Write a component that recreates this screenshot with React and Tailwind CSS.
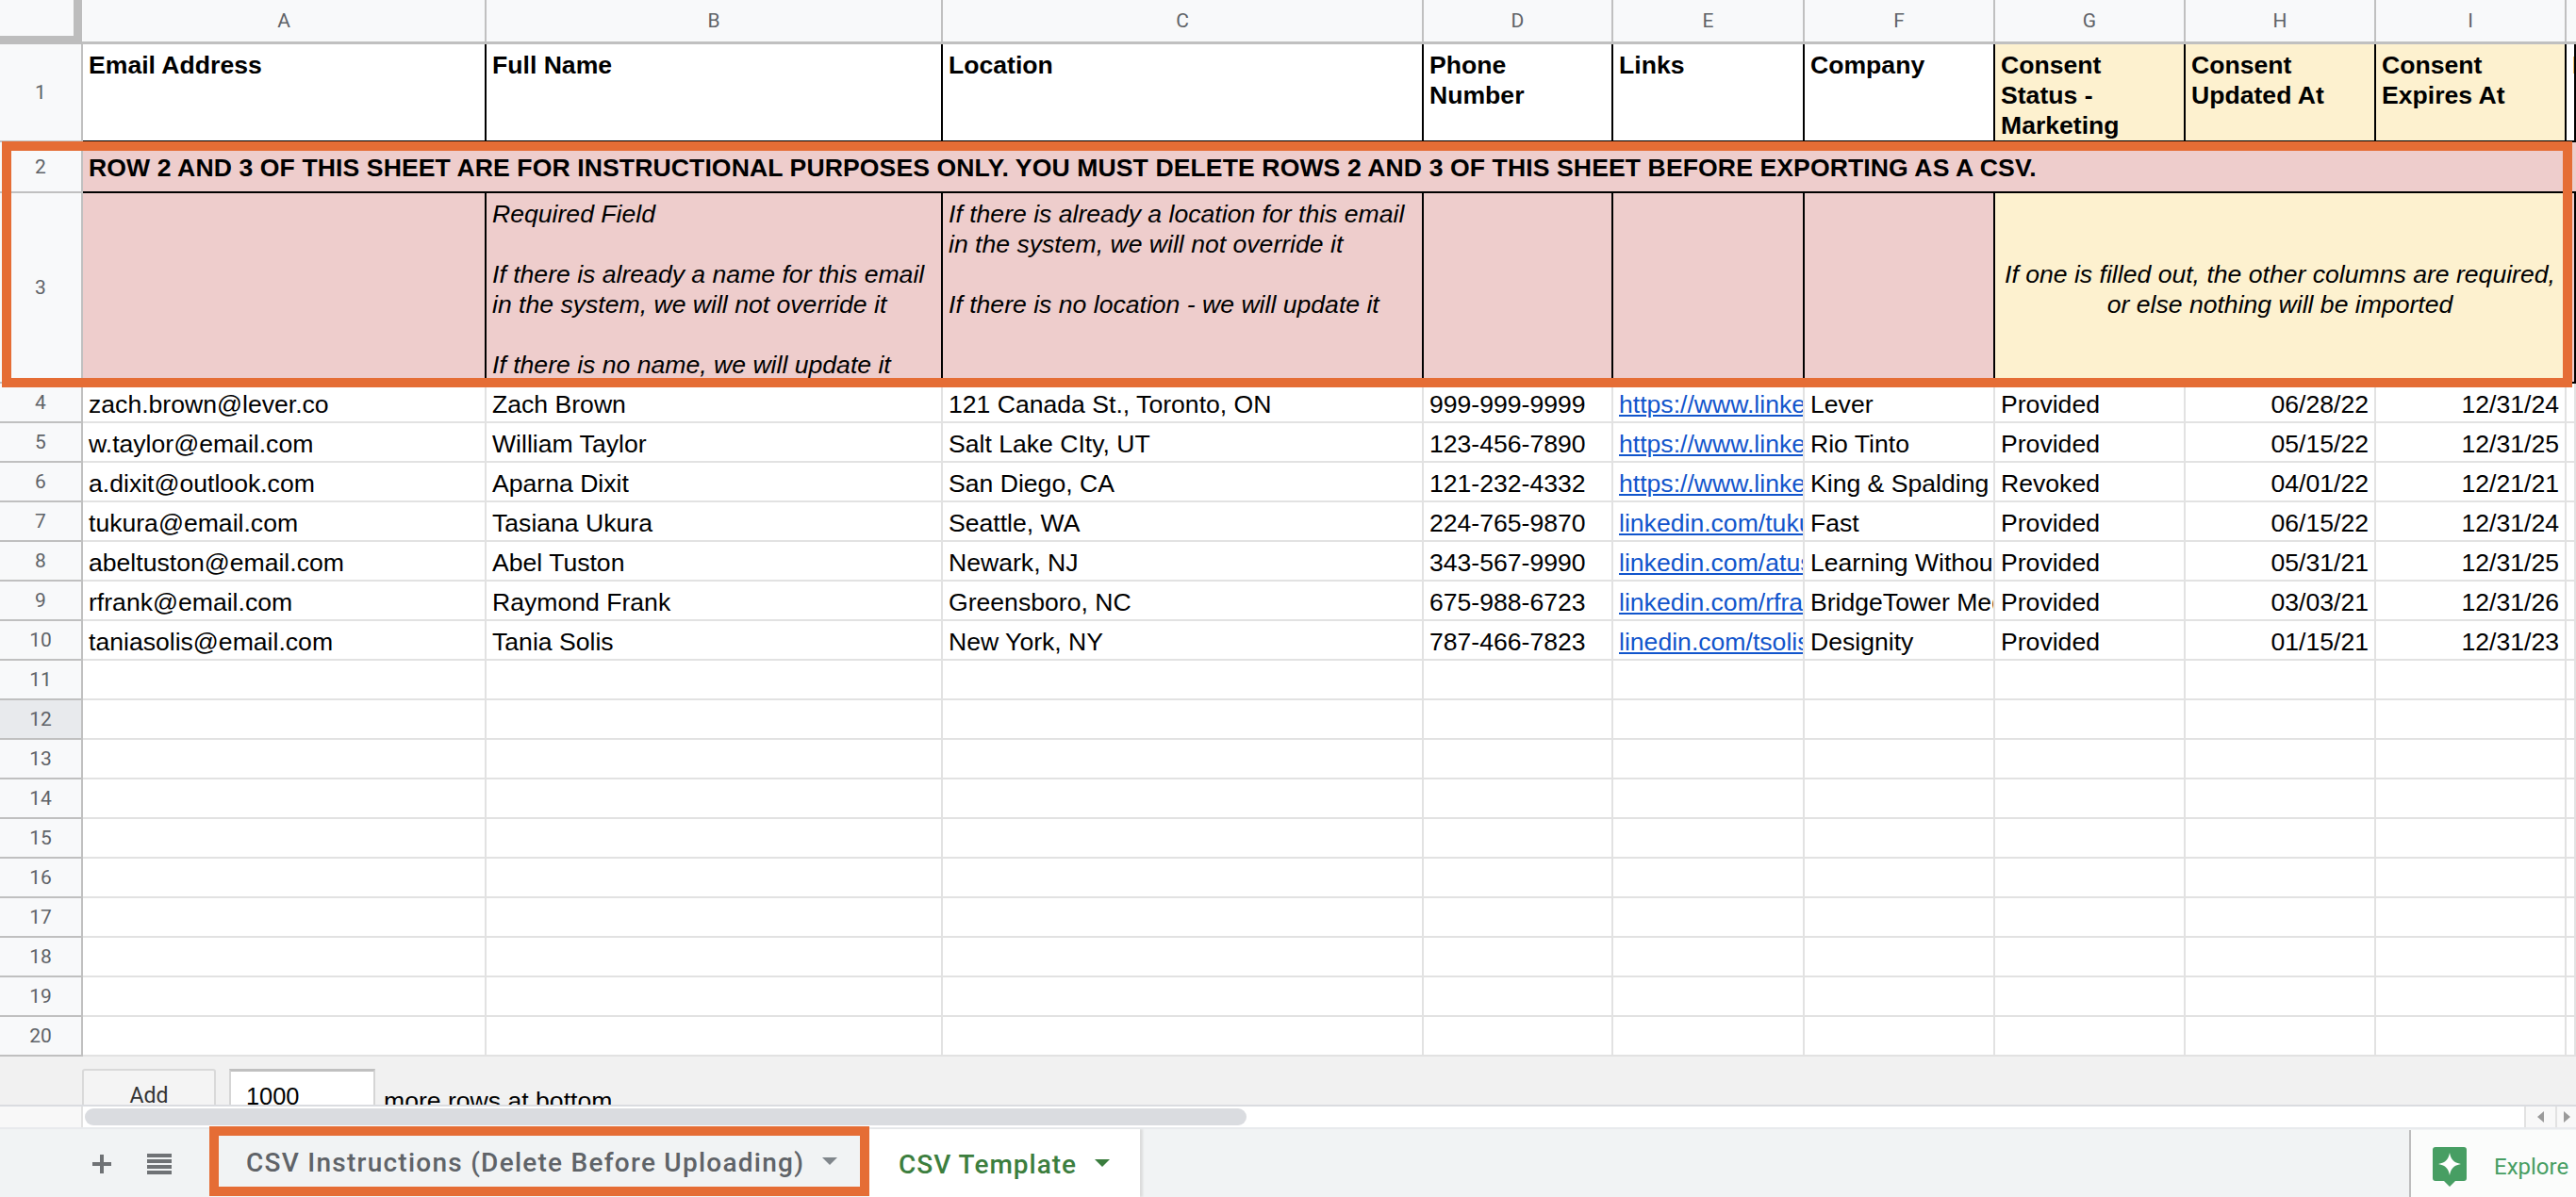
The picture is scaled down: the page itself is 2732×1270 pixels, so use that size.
const columns = ["A", "B", "C", "D", "E", "F", "G", "H", "I"];

const people = [
  ["zach.brown@lever.co", "Zach Brown", "121 Canada St., Toronto, ON", "999-999-9999", "https://www.linkedin.com/in/zachbrown", "Lever", "Provided", "06/28/22", "12/31/24"],
  ["w.taylor@email.com", "William Taylor", "Salt Lake CIty, UT", "123-456-7890", "https://www.linkedin.com/in/wtaylor", "Rio Tinto", "Provided", "05/15/22", "12/31/25"],
  ["a.dixit@outlook.com", "Aparna Dixit", "San Diego, CA", "121-232-4332", "https://www.linkedin.com/in/adixit", "King & Spalding", "Revoked", "04/01/22", "12/21/21"],
  ["tukura@email.com", "Tasiana Ukura", "Seattle, WA", "224-765-9870", "linkedin.com/tukura", "Fast", "Provided", "06/15/22", "12/31/24"],
  ["abeltuston@email.com", "Abel Tuston", "Newark, NJ", "343-567-9990", "linkedin.com/atuston", "Learning Without Limits", "Provided", "05/31/21", "12/31/25"],
  ["rfrank@email.com", "Raymond Frank", "Greensboro, NC", "675-988-6723", "linkedin.com/rfrank", "BridgeTower Media", "Provided", "03/03/21", "12/31/26"],
  ["taniasolis@email.com", "Tania Solis", "New York, NY", "787-466-7823", "linedin.com/tsolis", "Designity", "Provided", "01/15/21", "12/31/23"],
];

const emptyRows = [11, 12, 13, 14, 15, 16, 17, 18, 19, 20];

const rowClass = "grid grid-cols-[88px_428px_484px_510px_201px_203px_202px_202px_202px_202px_1fr]";
const sheetFont = "font-['Liberation_Sans',Arial,sans-serif] text-[26.6px] leading-[32px] text-black";
const headerFont = "font-['Roboto',sans-serif] text-[21px] text-[#5f6368]";

function RowHeader({ n, active }) {
  return (
    <div className={`flex items-center justify-center border-r-2 border-b-2 border-[#c0c0c0] ${headerFont} ${active ? "bg-[#e8eaed]" : "bg-[#f8f9fa]"}`}>
      {n}
    </div>
  );
}

function HeadCell({ children, yellow }) {
  return (
    <div className={`overflow-hidden whitespace-nowrap border-r-2 border-b-2 border-black pl-[6px] pt-[6px] font-bold ${yellow ? "bg-[#fdf1cf]" : "bg-white"}`}>
      {children}
    </div>
  );
}

function NoteCell({ children }) {
  return (
    <div className="overflow-hidden whitespace-nowrap border-r-2 border-b-2 border-black bg-[#eecdcc] pl-[6px] pt-[6px] italic">
      {children}
    </div>
  );
}

function DataCell({ children, right, link }) {
  return (
    <div className={`overflow-hidden whitespace-nowrap border-r-2 border-b-2 border-[#e2e2e2] pt-[6px] ${right ? "pr-[6px] text-right" : "pl-[6px]"} ${link ? "text-[#1155cc] underline" : ""}`}>
      {children}
    </div>
  );
}

function Caret({ className }) {
  return <div className={`h-0 w-0 border-x-[8px] border-t-[8px] border-x-transparent ${className}`} />;
}

export default function App() {
  return (
    <div className="relative flex h-screen w-full flex-col overflow-hidden bg-white">
      {/* column letters */}
      <div className={`${rowClass} h-[47px] border-b-[3px] border-[#c0c0c0] bg-[#f8f9fa] ${headerFont}`}>
        <div className="-mb-[3px] mr-px border-r-[9px] border-b-[9px] border-[#bdbdbd]" />
        {columns.map((c) => (
          <div key={c} className="flex items-center justify-center border-r-2 border-[#c0c0c0] pt-[2px]">{c}</div>
        ))}
        <div />
      </div>

      <div className={sheetFont}>
        <div className={`${rowClass} h-[104px]`}>
          <RowHeader n={1} />
          <HeadCell>Email Address</HeadCell>
          <HeadCell>Full Name</HeadCell>
          <HeadCell>Location</HeadCell>
          <HeadCell>Phone<br />Number</HeadCell>
          <HeadCell>Links</HeadCell>
          <HeadCell>Company</HeadCell>
          <HeadCell yellow>Consent<br />Status -<br />Marketing</HeadCell>
          <HeadCell yellow>Consent<br />Updated At</HeadCell>
          <HeadCell yellow>Consent<br />Expires At</HeadCell>
          <HeadCell>Last</HeadCell>
        </div>

        <div className={`${rowClass} h-[54px]`}>
          <RowHeader n={2} />
          <div className="col-span-10 flex items-center whitespace-nowrap border-b-2 border-black bg-[#eecdcc] pl-[6px] pt-[2px] font-bold tracking-[0.09px]">
            ROW 2 AND 3 OF THIS SHEET ARE FOR INSTRUCTIONAL PURPOSES ONLY. YOU MUST DELETE ROWS 2 AND 3 OF THIS SHEET BEFORE EXPORTING AS A CSV.
          </div>
        </div>

        <div className={`${rowClass} h-[202px]`}>
          <RowHeader n={3} />
          <NoteCell />
          <NoteCell>
            Required Field<br /><br />
            If there is already a name for this email<br />in the system, we will not override it<br /><br />
            If there is no name, we will update it
          </NoteCell>
          <NoteCell>
            If there is already a location for this email<br />in the system, we will not override it<br /><br />
            If there is no location - we will update it
          </NoteCell>
          <NoteCell />
          <NoteCell />
          <NoteCell />
          <div className="col-span-3 flex items-center justify-center border-r-2 border-b-2 border-black bg-[#fdf1cf] pt-[3px] text-center italic">
            <span>If one is filled out, the other columns are required,<br />or else nothing will be imported</span>
          </div>
          <NoteCell />
        </div>

        {people.map((p, i) => (
          <div key={p[0]} className={`${rowClass} h-[42px]`}>
            <RowHeader n={i + 4} />
            <DataCell>{p[0]}</DataCell>
            <DataCell>{p[1]}</DataCell>
            <DataCell>{p[2]}</DataCell>
            <DataCell>{p[3]}</DataCell>
            <DataCell link>{p[4]}</DataCell>
            <DataCell>{p[5]}</DataCell>
            <DataCell>{p[6]}</DataCell>
            <DataCell right>{p[7]}</DataCell>
            <DataCell right>{p[8]}</DataCell>
            <DataCell />
          </div>
        ))}

        {emptyRows.map((n) => (
          <div key={n} className={`${rowClass} h-[42px]`}>
            <RowHeader n={n} active={n === 12} />
            {columns.map((c) => <DataCell key={c} />)}
            <DataCell />
          </div>
        ))}
      </div>

      {/* add rows */}
      <div className="flex h-[51px] items-start overflow-hidden bg-[#f1f1f1] pl-[87px] pt-[13px]">
        <div className="flex h-[60px] w-[142px] justify-center rounded-t-[3px] border-2 border-[#d9d9d9] bg-[#f4f4f4] pt-[12px] font-['Roboto',sans-serif] text-[23px] leading-[30px] text-[#333]">Add</div>
        <div className="ml-[14px] h-[60px] w-[155px] border-2 border-t-[3px] border-[#d5d5d5] border-t-[#c0c0c0] bg-white pl-[16px] pt-[11px] font-['Liberation_Sans',Arial,sans-serif] text-[25.4px] leading-[30px] text-black">1000</div>
        <div className="ml-[9px] pt-[18px] font-['Liberation_Sans',Arial,sans-serif] text-[26.6px] leading-[32px] text-black">more rows at bottom</div>
      </div>

      {/* horizontal scrollbar */}
      <div className="flex h-[24px] border-t-2 border-[#dadce0] bg-white">
        <div className="w-[88px] border-r-2 border-[#e2e2e2] bg-[#f8f8f8]" />
        <div className="flex-1 pl-[2px] pt-[2px]">
          <div className="h-[18px] w-[1232px] rounded-full bg-[#dadce0]" />
        </div>
        <div className="flex w-[33px] items-center justify-center border-l-2 border-[#e2e2e2] bg-[#f8f8f8]">
          <div className="h-0 w-0 border-y-[6px] border-r-[7px] border-y-transparent border-r-[#9a9a9a]" />
        </div>
        <div className="flex w-[22px] items-center justify-center border-l-2 border-[#e2e2e2] bg-[#f8f8f8]">
          <div className="h-0 w-0 border-y-[6px] border-l-[7px] border-y-transparent border-l-[#9a9a9a]" />
        </div>
      </div>

      {/* sheet tabs */}
      <div className="flex flex-1 border-t-2 border-[#e8eaed] bg-[#f1f3f4]">
        <div className="flex w-[222px] items-center">
          <svg className="ml-[96px] mt-[2px]" width="24" height="24" viewBox="0 0 24 24" fill="#6f7275">
            <rect x="10" y="2" width="4" height="20" />
            <rect x="2" y="10" width="20" height="4" />
          </svg>
          <svg className="ml-[36px] mt-[2px]" width="26" height="24" viewBox="0 0 26 24" fill="#6f7275">
            <rect x="0" y="1" width="26" height="4" />
            <rect x="0" y="7" width="26" height="4" />
            <rect x="0" y="13" width="26" height="4" />
            <rect x="0" y="19" width="26" height="4" />
          </svg>
        </div>
        <div className="-mt-[3px] mb-px flex w-[700px] items-center border-[10px] border-[#e56d35] pl-[29px] font-['Roboto',sans-serif] text-[28px] font-medium tracking-[1.25px] text-[#5f6368]">
          <span className="pt-[4px]">CSV Instructions (Delete Before Uploading)</span>
          <Caret className="ml-[19px] border-t-[#80868b]" />
        </div>
        <div className="flex w-[287px] items-center bg-white pl-[31px] font-['Roboto',sans-serif] text-[28px] font-medium tracking-[1px] text-[#3c7e3e] shadow-[3px_0_2px_#dcdcdc]">
          <span className="pt-[4px]">CSV Template</span>
          <Caret className="ml-[19px] border-t-[#3a7d3e]" />
        </div>
        <div className="flex-1" />
        <div className="mt-[1px] flex w-[177px] items-center border-l-2 border-[#bdbdbd] bg-[#fbfcfb] pl-[22px]">
          <svg width="38" height="44" viewBox="0 0 38 44" className="mt-[6px]">
            <path fill="#479e63" d="M4 1h30a3 3 0 0 1 3 3v30a3 3 0 0 1-3 3h-9l-6 6-6-6H4a3 3 0 0 1-3-3V4a3 3 0 0 1 3-3z" />
            <path fill="#fff" d="M19 7c1.400 7 4 10.600 12 12-8 1.400-10.600 5-12 12-1.400-7-4-10.600-12-12 8-1.400 10.600-5 12-12z" />
          </svg>
          <span className="ml-[28px] pt-[6px] font-['Roboto',sans-serif] text-[24px] text-[#479e63]">Explore</span>
        </div>
      </div>

      {/* callout round rows 2 and 3 */}
      <div className="pointer-events-none absolute left-[2px] top-[150px] h-[261px] w-[2726px] border-[10px] border-[#e56d35]" />
    </div>
  );
}
